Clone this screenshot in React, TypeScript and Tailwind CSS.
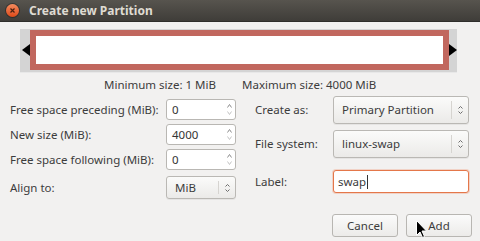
import React from 'react'

function SpinButton({ value }: { value: string }) {
  return (
    <div className="flex h-[21px] w-[70px] rounded-[3px] border border-[#b9b7b3] bg-white">
      <div className="flex flex-1 items-center pl-[5px] text-[#333]">{value}</div>
      <div className="flex w-[12px] flex-col items-center justify-center gap-[3px] text-[#8d8d8d]">
        <svg width="5" height="4" viewBox="0 0 5 4"><path d="M0.5 3.5 L2.5 0.5 L4.5 3.5" fill="none" stroke="currentColor" /></svg>
        <svg width="5" height="4" viewBox="0 0 5 4"><path d="M0.5 0.5 L2.5 3.5 L4.5 0.5" fill="none" stroke="#c4c4c4" /></svg>
      </div>
    </div>
  )
}

function Combo({ value, className }: { value: string; className: string }) {
  return (
    <div
      className={
        'flex rounded-[3px] border border-[#bab8b4] bg-gradient-to-b from-[#fbfbfa] to-[#ebeae8] shadow-[0_1px_0_rgba(0,0,0,0.05)] ' +
        className
      }
    >
      <div className="flex flex-1 items-center pl-[8px] text-[#3c3c3c]">{value}</div>
      <div className="my-[4px] w-px bg-[#d6d4d0]" />
      <div className="flex w-[16px] flex-col items-center justify-center gap-[2px] text-[#6d6d6d]">
        <svg width="5" height="3" viewBox="0 0 5 3"><path d="M0.5 2.5 L2.5 0.5 L4.5 2.5" fill="none" stroke="currentColor" /></svg>
        <svg width="5" height="3" viewBox="0 0 5 3"><path d="M0.5 0.5 L2.5 2.5 L4.5 0.5" fill="none" stroke="currentColor" /></svg>
      </div>
    </div>
  )
}

function Button({ label }: { label: string }) {
  return (
    <div className="flex h-[23px] w-[66px] items-center justify-center rounded-[3px] border border-[#b8b6b2] bg-gradient-to-b from-[#fbfbfb] to-[#ecebe9] text-[#3c3c3c]">
      {label}
    </div>
  )
}

export default function App() {
  return (
    <div className="relative flex h-[241px] w-[480px] flex-col overflow-hidden bg-[#f2f1f0] font-['Noto_Sans',sans-serif] text-[11.5px] leading-none text-[#3c3c3c]">
      <div className="flex h-[22px] items-center border-b border-[#2f2e2b] bg-gradient-to-b from-[#57544e] to-[#3f3d39]">
        <div className="ml-[6px] flex h-[13px] w-[13px] items-center justify-center rounded-full bg-gradient-to-b from-[#f58a5c] to-[#dd4814] shadow-[0_0_0_1px_rgba(0,0,0,0.3)]">
          <svg width="5" height="5" viewBox="0 0 5 5"><path d="M0.5 0.5 L4.5 4.5 M4.5 0.5 L0.5 4.5" stroke="#4a2010" strokeWidth="1.2" /></svg>
        </div>
        <div className="ml-[10px] text-[12px] font-bold text-[#dfdbd2]">Create new Partition</div>
      </div>

      <div className="ml-[20px] mt-[7px] flex h-[43px] w-[437px] bg-[#d4d4d4] pb-[2px] pt-[1px] shadow-[0_1px_0_#e8e8e8]">
        <div className="flex w-[10px] items-center justify-start pl-[2px]">
          <svg width="8" height="12" viewBox="0 0 8 12"><path d="M0 6 L8 0 L8 12 Z" fill="#000" /></svg>
        </div>
        <div className="flex-1 border-[6px] border-[#c1675e] bg-white" />
        <div className="flex w-[8px] items-center">
          <svg width="8" height="12" viewBox="0 0 8 12"><path d="M8 6 L0 0 L0 12 Z" fill="#000" /></svg>
        </div>
      </div>

      <div className="mt-[7px] flex h-[12px] items-center">
        <div className="ml-[104px] w-[138px]">Minimum size: 1 MiB</div>
        <div>Maximum size: 4000 MiB</div>
      </div>

      <div className="mt-[5px] flex">
        <div className="ml-[10px] flex w-[226px] flex-col">
          <div className="mt-[3px] flex h-[21px] items-center justify-between">
            <span>Free space preceding (MiB):</span>
            <SpinButton value="0" />
          </div>
          <div className="mt-[4px] flex h-[21px] items-center justify-between">
            <span>New size (MiB):</span>
            <SpinButton value="4000" />
          </div>
          <div className="mt-[4px] flex h-[21px] items-center justify-between">
            <span>Free space following (MiB):</span>
            <SpinButton value="0" />
          </div>
          <div className="mt-[6px] flex h-[23px] items-center justify-between">
            <span>Align to:</span>
            <Combo value="MiB" className="h-[23px] w-[70px]" />
          </div>
        </div>

        <div className="ml-[19px] flex w-[214px] flex-col">
          <div className="flex h-[28px] items-center justify-between">
            <span>Create as:</span>
            <Combo value="Primary Partition" className="h-[28px] w-[136px]" />
          </div>
          <div className="mt-[6px] flex h-[28px] items-center justify-between">
            <span>File system:</span>
            <Combo value="linux-swap" className="h-[28px] w-[136px]" />
          </div>
          <div className="mt-[12px] flex h-[23px] items-center justify-between">
            <span>Label:</span>
            <div className="flex h-[23px] w-[136px] items-center rounded-[3px] border border-[#e4774a] bg-white pl-[4px] shadow-[0_0_0_1px_rgba(240,119,70,0.25)]">
              swap<span className="ml-px h-[14px] w-px bg-[#333]" />
            </div>
          </div>
        </div>
      </div>

      <div className="mt-[15px] flex justify-end gap-[8px] pr-[8px]">
        <Button label="Cancel" />
        <Button label="Add" />
      </div>

      <svg className="absolute left-[416px] top-[220px]" width="12" height="19" viewBox="0 0 12 19">
        <path d="M0.5 0.5 L0.5 15.5 L4 12 L6.5 17.5 L8.5 16.5 L6 11 L10.5 11 Z" fill="#000" stroke="#fff" strokeWidth="1" />
      </svg>
    </div>
  )
}
